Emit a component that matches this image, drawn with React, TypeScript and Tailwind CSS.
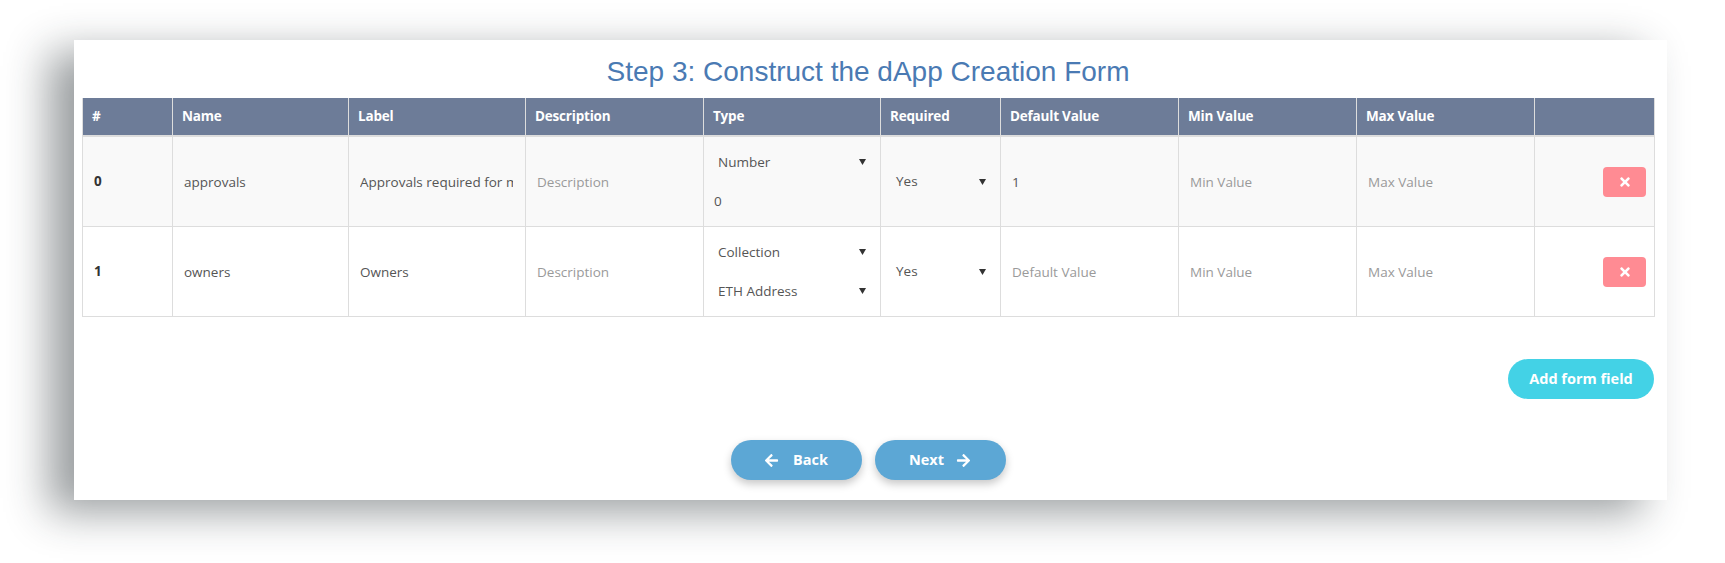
import React from "react";
import { FaArrowLeft, FaArrowRight, FaTimes } from "react-icons/fa";

const GRID =
  "grid grid-cols-[90px_176px_177px_178px_177px_120px_178px_178px_178px_120px]";

const headers = [
  "#",
  "Name",
  "Label",
  "Description",
  "Type",
  "Required",
  "Default Value",
  "Min Value",
  "Max Value",
  "",
];

function Caret() {
  return (
    <svg width="7" height="6" viewBox="0 0 7 6" className="shrink-0">
      <path d="M0 0 H7 L3.5 6 Z" fill="#333" />
    </svg>
  );
}

function FakeSelect({ value, pl = "pl-[6px]" }: { value: string; pl?: string }) {
  return (
    <div className={`h-[34px] w-full flex items-center justify-between ${pl} pr-[6px] text-[#555]`}>
      <span>{value}</span>
      <Caret />
    </div>
  );
}

function TextInput({ value, placeholder }: { value?: string; placeholder: string }) {
  return (
    <input
      readOnly
      value={value ?? ""}
      placeholder={placeholder}
      className="w-full min-w-0 h-[34px] bg-transparent outline-none pl-[3px] pr-[4px] text-[#555] placeholder:text-[#9a9a9a]"
    />
  );
}

type Row = {
  idx: string;
  name: string;
  label: string;
  type: React.ReactNode;
  def?: string;
};

const rows: Row[] = [
  {
    idx: "0",
    name: "approvals",
    label: "Approvals required for multisig transactions",
    type: (
      <>
        <FakeSelect value="Number" />
        <div className="h-[34px] flex items-center pl-[2px] text-[#555]">0</div>
      </>
    ),
    def: "1",
  },
  {
    idx: "1",
    name: "owners",
    label: "Owners",
    type: (
      <>
        <FakeSelect value="Collection" />
        <FakeSelect value="ETH Address" />
      </>
    ),
  },
];

export default function App() {
  return (
    <div className="w-[1725px] h-[563px] bg-white overflow-hidden pt-[40px] pl-[74px] font-['Open_Sans',sans-serif]">
      <div className="w-[1593px] h-[460px] bg-white shadow-[-25px_12px_40px_rgba(30,40,45,0.45)] pt-4 pl-2 pr-[13px] flex flex-col">
        <h1 className="text-center text-[28px] leading-[32px] text-[#4a7ab3] mb-[10px] font-['Liberation_Sans',Arial,sans-serif]">
          Step 3: Construct the dApp Creation Form
        </h1>

        <div className={`${GRID} w-[1573px] border-l border-[#dddddd] text-[13.5px]`}>
          {headers.map((h, i) => (
            <div
              key={i}
              className="h-[39px] bg-[#6d7c98] border-r border-b-2 border-[#dddddd] flex items-center px-[9px] text-white font-bold tracking-[-0.2px]"
            >
              {h}
            </div>
          ))}

          {rows.map((r, ri) => {
            const bg = ri === 0 ? "bg-[#f9f9f9]" : "bg-white";
            const cell = `border-r border-b border-[#dddddd] flex items-center p-2 ${bg}`;
            return (
              <React.Fragment key={ri}>
                <div className={cell}>
                  <span className="pl-[3px] font-bold text-[#333]">{r.idx}</span>
                </div>
                <div className={cell}>
                  <TextInput value={r.name} placeholder="Name" />
                </div>
                <div className={cell}>
                  <TextInput value={r.label} placeholder="Label" />
                </div>
                <div className={cell}>
                  <TextInput placeholder="Description" />
                </div>
                <div className={`${cell} flex-col items-stretch justify-center gap-[5px]`}>{r.type}</div>
                <div className={cell}>
                  <FakeSelect value="Yes" pl="pl-[7px]" />
                </div>
                <div className={cell}>
                  <TextInput value={r.def} placeholder="Default Value" />
                </div>
                <div className={cell}>
                  <TextInput placeholder="Min Value" />
                </div>
                <div className={cell}>
                  <TextInput placeholder="Max Value" />
                </div>
                <div className={`${cell} justify-end`}>
                  <button className="w-[43px] h-[30px] rounded-[4px] bg-[#ff8b93] flex items-center justify-center text-white">
                    <FaTimes size={14} />
                  </button>
                </div>
              </React.Fragment>
            );
          })}
        </div>

        <div className="flex justify-end mt-[42px]">
          <button className="h-10 w-[146px] rounded-full bg-[#43d2e6] text-white font-bold text-[14.5px] flex items-center justify-center">
            Add form field
          </button>
        </div>

        <div className="flex justify-center gap-[13px] mt-[41px]">
          <button className="h-10 w-[131px] rounded-full bg-[#5ca7d5] text-white font-bold text-[14.5px] shadow-[0_4px_8px_rgba(0,0,0,0.22)] flex items-center justify-center gap-[14px]">
            <FaArrowLeft size={15} />
            <span>Back</span>
          </button>
          <button className="h-10 w-[131px] rounded-full bg-[#5ca7d5] text-white font-bold text-[14.5px] shadow-[0_4px_8px_rgba(0,0,0,0.22)] flex items-center justify-center gap-[12px]">
            <span>Next</span>
            <FaArrowRight size={15} />
          </button>
        </div>
      </div>
    </div>
  );
}
